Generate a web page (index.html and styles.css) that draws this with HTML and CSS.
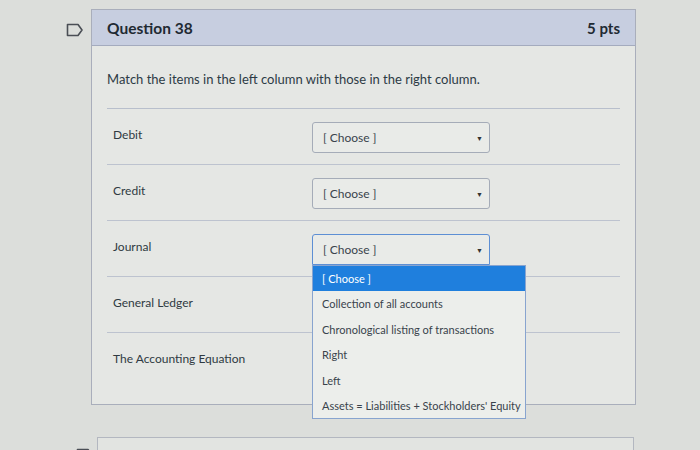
FILE: index.html
```html
<!DOCTYPE html>
<html>
<head>
<meta charset="utf-8">
<link rel="stylesheet" href="styles.css">
</head>
<body>
<div class="question">
  <svg class="flag" width="18" height="14" viewBox="0 0 18 14"><path d="M1.5 1.5 H12 L16 7 L12 12.5 H1.5 Z" fill="none" stroke="#4a4e55" stroke-width="1.6" stroke-linejoin="round"/></svg>
  <div class="header">
    <span class="title">Question 38</span>
    <span class="pts">5 pts</span>
  </div>
  <div class="body">
    <p class="prompt">Match the items in the left column with those in the right column.</p>
    <div class="rows">
      <div class="row">
        <span class="label">Debit</span>
        <div class="select"><span>[ Choose ]</span><span class="caret">▼</span></div>
      </div>
      <div class="row">
        <span class="label">Credit</span>
        <div class="select"><span>[ Choose ]</span><span class="caret">▼</span></div>
      </div>
      <div class="row">
        <span class="label">Journal</span>
        <div class="select open"><span>[ Choose ]</span><span class="caret">▼</span>
          <ul class="menu">
            <li class="active">[ Choose ]</li>
            <li>Collection of all accounts</li>
            <li>Chronological listing of transactions</li>
            <li>Right</li>
            <li>Left</li>
            <li>Assets = Liabilities + Stockholders' Equity</li>
          </ul>
        </div>
      </div>
      <div class="row">
        <span class="label">General Ledger</span>
      </div>
      <div class="row last">
        <span class="label">The Accounting Equation</span>
      </div>
    </div>
  </div>
</div>
<div class="question next">
  <svg class="flag" width="18" height="14" viewBox="0 0 18 14"><path d="M1.5 1.5 H12 L16 7 L12 12.5 H1.5 Z" fill="none" stroke="#4a4e55" stroke-width="1.6" stroke-linejoin="round"/></svg>
  <div class="header">
    <span class="title">Question 39</span>
  </div>
</div>
</body>
</html>
```
FILE: styles.css
```css
html, body {
  margin: 0;
  padding: 0;
  background: #dcdedb;
  font-family: Lato, "Open Sans", sans-serif;
  color: #2d3b45;
  overflow: hidden;
  height: 450px;
}
.question {
  position: relative;
  margin: 9px 0 0 91px;
  width: 543px;
  background: #e5e7e4;
  border: 1px solid #a9aebb;
}
.flag {
  position: absolute;
  left: -26px;
  top: 13px;
}
.header {
  height: 35px;
  background: #c7cee0;
  border-bottom: 1px solid #a4abbe;
  display: flex;
  align-items: center;
  justify-content: space-between;
  padding: 0 15px 0 15px;
}
.title {
  font-weight: 700;
  font-size: 15.5px;
  color: #1f2a33;
}
.pts {
  font-weight: 700;
  font-size: 15px;
  color: #1f2a33;
}
.body {
  padding: 0 15px 0 15px;
}
.prompt {
  margin: 0;
  padding: 25px 0 0 0;
  height: 37px;
  font-size: 13px;
  color: #2d3b45;
  border-bottom: 1px solid #b8bfcc;
}
.rows {
  display: flex;
  flex-direction: column;
}
.row {
  height: 55px;
  border-bottom: 1px solid #bdc3cf;
  display: flex;
  align-items: flex-start;
  padding-left: 6px;
}
.row.last {
  border-bottom: none;
  height: 71px;
}
.label {
  width: 199px;
  font-size: 12px;
  padding-top: 18px;
  color: #2f3a42;
}
.select {
  position: relative;
  margin-top: 13px;
  width: 160px;
  height: 29px;
  border: 1px solid #a5acb8;
  border-radius: 3px;
  background: #e9ebe8;
  display: flex;
  align-items: center;
  justify-content: space-between;
  padding: 0 6px 0 10px;
  font-size: 12px;
  color: #3a444c;
}
.select.open {
  border-color: #5d8fd4;
  border-radius: 3px 3px 0 0;
}
.caret {
  font-size: 7px;
  color: #333;
}
.menu {
  position: absolute;
  left: -1px;
  top: 30px;
  width: 212px;
  margin: 0;
  padding: 0;
  list-style: none;
  background: #eceeeb;
  border: 1px solid #88a4cf;
  z-index: 2;
}
.menu li {
  height: 25.4px;
  line-height: 25px;
  padding-left: 9px;
  font-size: 11px;
  color: #39434b;
  white-space: nowrap;
}
.menu li.active {
  background: #1f7fdd;
  color: #ffffff;
}
.question.next {
  margin: 32px 0 0 97px;
  width: 535px;
  background: #e2e4e1;
  border-color: #b3b7c0;
}
.next .header {
  background: #e2e4e1;
  border-bottom: none;
  padding-left: 17px;
}
.next .flag { left: -22px; top: 10px; }
```
